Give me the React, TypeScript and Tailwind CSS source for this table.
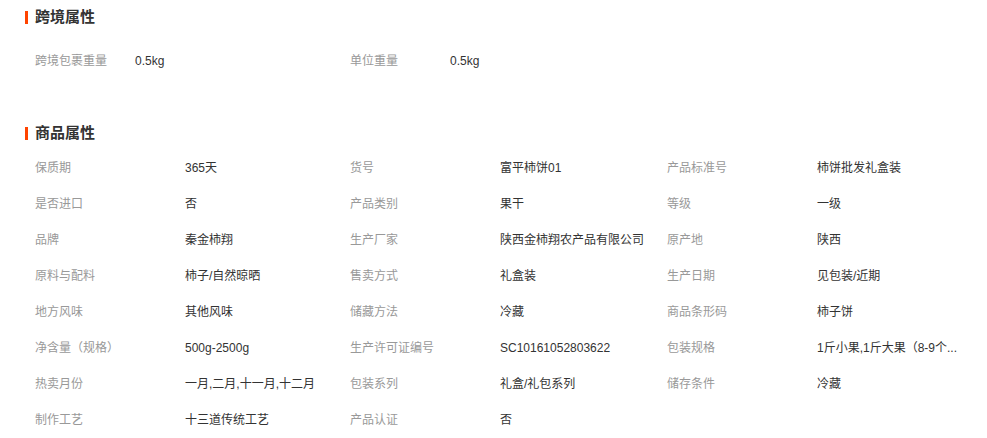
import React from "react";

const CROSS_BORDER: [string, string][] = [
  ["跨境包裹重量", "0.5kg"],
  ["单位重量", "0.5kg"],
];

const PRODUCT_ATTRS: [string, string][] = [
  ["保质期", "365天"],
  ["货号", "富平柿饼01"],
  ["产品标准号", "柿饼批发礼盒装"],
  ["是否进口", "否"],
  ["产品类别", "果干"],
  ["等级", "一级"],
  ["品牌", "秦金柿翔"],
  ["生产厂家", "陕西金柿翔农产品有限公司"],
  ["原产地", "陕西"],
  ["原料与配料", "柿子/自然晾晒"],
  ["售卖方式", "礼盒装"],
  ["生产日期", "见包装/近期"],
  ["地方风味", "其他风味"],
  ["储藏方法", "冷藏"],
  ["商品条形码", "柿子饼"],
  ["净含量（规格）", "500g-2500g"],
  ["生产许可证编号", "SC10161052803622"],
  ["包装规格", "1斤小果,1斤大果（8-9个..."],
  ["热卖月份", "一月,二月,十一月,十二月"],
  ["包装系列", "礼盒/礼包系列"],
  ["储存条件", "冷藏"],
  ["制作工艺", "十三道传统工艺"],
  ["产品认证", "否"],
];

const SectionTitle: React.FC<{ title: string }> = ({ title }) => (
  <div className="flex items-center h-[18px] pl-[25px]">
    <span className="w-[3px] h-[13px] bg-[#ff4400] mr-[7px]" />
    <h3 className="text-[15px] font-bold text-[#333] leading-[18px]">{title}</h3>
  </div>
);

export default function App() {
  return (
    <div
      className="w-[987px] h-[438px] bg-white overflow-hidden text-[12px]"
      style={{ fontFamily: '"Liberation Sans", "Noto Sans CJK SC", sans-serif' }}
    >
      {/* 跨境属性 */}
      <section className="pt-[8px]">
        <SectionTitle title="跨境属性" />
        <div className="flex pl-[35px] mt-[17px]">
          {CROSS_BORDER.map(([label, value]) => (
            <div key={label} className="w-[315px] h-[36px] flex items-center">
              <span className="w-[100px] text-[#999]">{label}</span>
              <span className="text-[#333]">{value}</span>
            </div>
          ))}
        </div>
      </section>

      {/* 商品属性 */}
      <section className="mt-[45px]">
        <SectionTitle title="商品属性" />
        <div className="grid grid-cols-[315px_317px_317px] pl-[35px] mt-[8px]">
          {PRODUCT_ATTRS.map(([label, value]) => (
            <div key={label} className="h-[36px] flex items-center">
              <span className="w-[150px] shrink-0 text-[#999]">{label}</span>
              <span className="whitespace-nowrap text-[#333]">{value}</span>
            </div>
          ))}
        </div>
      </section>
    </div>
  );
}
